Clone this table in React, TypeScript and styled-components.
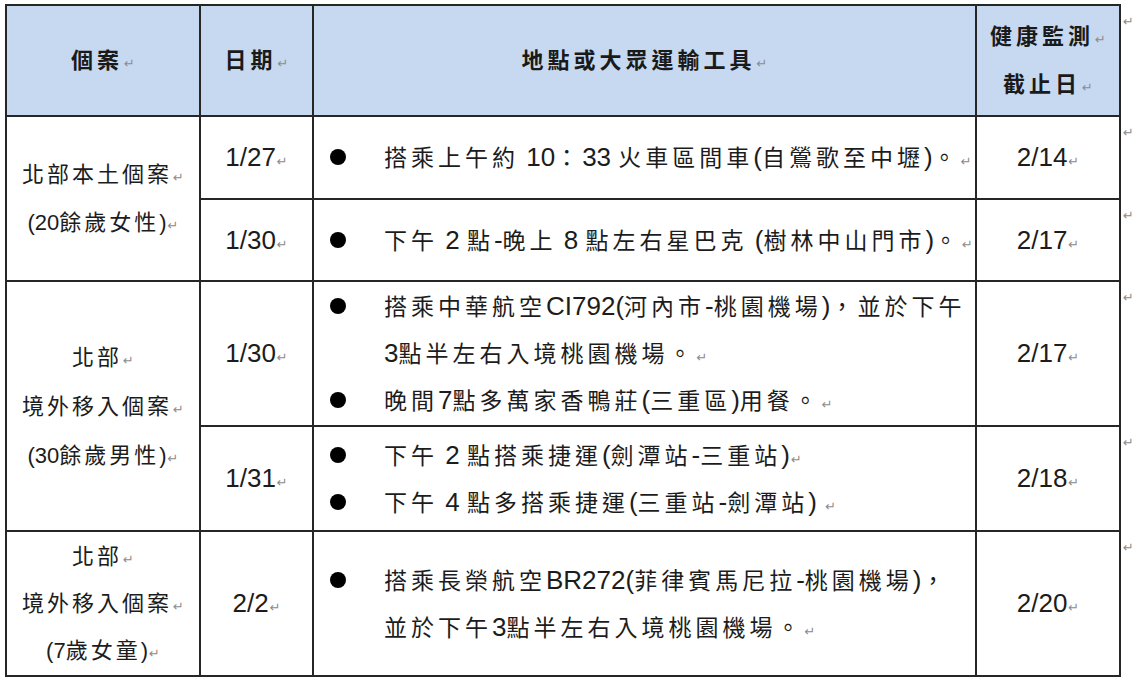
import React from 'react';
import styled, { createGlobalStyle } from 'styled-components';

const GlobalStyle = createGlobalStyle`
  html, body {
    margin: 0;
    padding: 0;
    background: #ffffff;
  }
  body {
    font-family: "Liberation Sans", "Noto Sans CJK TC", sans-serif;
    color: #1c1c1c;
  }
`;

// Chinese runs are set on a wider grid than Latin ones, as Word does
const Han = styled.span`
  font-family: "Noto Sans CJK TC", sans-serif;
  line-height: 1;
`;

const Mark = styled.span`
  font-family: "DejaVu Sans", sans-serif;
  font-size: 13px;
  font-weight: 400;
  line-height: 1;
  letter-spacing: 0;
  color: #8c8c8c;
  margin-left: 1px;
`;

const Page = styled.div`
  padding: 4px 0 0 5px;
`;

const Table = styled.table`
  border-collapse: collapse;
  table-layout: fixed;
  width: 1126px;
`;

const Row = styled.tr<{ $h: number }>`
  height: ${p => p.$h}px;
`;

interface CellProps {
  $latin?: number;
  $han?: number;
  $gap?: number;
  $lh?: number;
}

const HeadCell = styled.th`
  background: #c6d9f1;
  border: 2px solid #262626;
  font-weight: 700;
  font-size: 22px;
  line-height: 48px;
  text-align: center;
  vertical-align: middle;
  padding: 0;
  color: #1a1a1a;

  ${Han} {
    font-size: 22px;
    letter-spacing: 4px;
  }
`;

const Cell = styled.td<CellProps>`
  border: 2px solid #262626;
  padding: 0;
  vertical-align: middle;
  text-align: center;
  font-size: ${p => p.$latin ?? 26}px;
  line-height: ${p => p.$lh ?? 47}px;

  ${Han} {
    font-size: ${p => p.$han ?? 23}px;
    letter-spacing: ${p => p.$gap ?? 4}px;
  }
`;

const RowEnd = styled.td`
  border: none;
  padding: 9px 0 0 1px;
  vertical-align: top;
  text-align: left;
  line-height: 14px;
`;

const BulletList = styled.ul`
  list-style: none;
  margin: 0;
  padding: 0 0 0 16px;
  text-align: left;
`;

const BulletItem = styled.li`
  display: flex;
  align-items: flex-start;
  white-space: nowrap;
`;

const Dot = styled.span`
  flex: none;
  width: 16px;
  height: 16px;
  margin: 15px 38px 0 0;
  border-radius: 50%;
  background: #000000;
`;

const ItemText = styled.span`
  display: block;
`;

const HAN_RE = /([\u2E80-\u9FFF\u3000-\u303F\uFF00-\uFFEF]+)/;

const Run: React.FC<{ text: string }> = ({ text }) => (
  <>
    {text.split(HAN_RE).map((part, i) =>
      part === '' ? null : i % 2 === 1 ? <Han key={i}>{part}</Han> : <React.Fragment key={i}>{part}</React.Fragment>
    )}
  </>
);

const Bullets: React.FC<{ items: string[][] }> = ({ items }) => (
  <BulletList>
    {items.map((lines, i) => (
      <BulletItem key={i}>
        <Dot />
        <ItemText>
          {lines.map((line, j) => (
            <React.Fragment key={j}>
              <Run text={line} />
              {j < lines.length - 1 ? <br /> : <Mark>↵</Mark>}
            </React.Fragment>
          ))}
        </ItemText>
      </BulletItem>
    ))}
  </BulletList>
);

const Lines: React.FC<{ lines: string[] }> = ({ lines }) => (
  <>
    {lines.map((line, i) => (
      <div key={i}>
        <Run text={line} />
        <Mark>↵</Mark>
      </div>
    ))}
  </>
);

const Text: React.FC<{ children: string }> = ({ children }) => (
  <>
    <Run text={children} />
    <Mark>↵</Mark>
  </>
);

const EndMark = () => (
  <RowEnd>
    <Mark>↵</Mark>
  </RowEnd>
);

export default function App() {
  return (
    <Page>
      <GlobalStyle />
      <Table>
        <colgroup>
          <col style={{ width: 194 }} />
          <col style={{ width: 113 }} />
          <col style={{ width: 663 }} />
          <col style={{ width: 144 }} />
          <col style={{ width: 12 }} />
        </colgroup>
        <tbody>
          <Row $h={111}>
            <HeadCell><Text>個案</Text></HeadCell>
            <HeadCell><Text>日期</Text></HeadCell>
            <HeadCell><Text>地點或大眾運輸工具</Text></HeadCell>
            <HeadCell><Lines lines={['健康監測', '截止日']} /></HeadCell>
            <EndMark />
          </Row>
          <Row $h={83}>
            <Cell rowSpan={2} $latin={22} $han={22} $gap={3} $lh={48}>
              <Lines lines={['北部本土個案', '(20餘歲女性)']} />
            </Cell>
            <Cell><Text>1/27</Text></Cell>
            <Cell>
              <Bullets items={[['搭乘上午約 10：33 火車區間車(自鶯歌至中壢)。']]} />
            </Cell>
            <Cell><Text>2/14</Text></Cell>
            <EndMark />
          </Row>
          <Row $h={82}>
            <Cell><Text>1/30</Text></Cell>
            <Cell>
              <Bullets items={[['下午 2 點-晚上 8 點左右星巴克 (樹林中山門市)。']]} />
            </Cell>
            <Cell><Text>2/17</Text></Cell>
            <EndMark />
          </Row>
          <Row $h={145}>
            <Cell rowSpan={2} $latin={22} $han={22} $gap={3} $lh={49}>
              <Lines lines={['北部', '境外移入個案', '(30餘歲男性)']} />
            </Cell>
            <Cell><Text>1/30</Text></Cell>
            <Cell>
              <Bullets
                items={[
                  ['搭乘中華航空CI792(河內市-桃園機場)，並於下午', '3點半左右入境桃園機場。'],
                  ['晚間7點多萬家香鴨莊(三重區)用餐。'],
                ]}
              />
            </Cell>
            <Cell><Text>2/17</Text></Cell>
            <EndMark />
          </Row>
          <Row $h={105}>
            <Cell><Text>1/31</Text></Cell>
            <Cell>
              <Bullets
                items={[
                  ['下午 2 點搭乘捷運(劍潭站-三重站)'],
                  ['下午 4 點多搭乘捷運(三重站-劍潭站)  '],
                ]}
              />
            </Cell>
            <Cell><Text>2/18</Text></Cell>
            <EndMark />
          </Row>
          <Row $h={145}>
            <Cell $latin={22} $han={22} $gap={3} $lh={47}>
              <Lines lines={['北部', '境外移入個案', '(7歲女童)']} />
            </Cell>
            <Cell><Text>2/2</Text></Cell>
            <Cell>
              <Bullets
                items={[['搭乘長榮航空BR272(菲律賓馬尼拉-桃園機場)，', '並於下午3點半左右入境桃園機場。']]}
              />
            </Cell>
            <Cell><Text>2/20</Text></Cell>
            <EndMark />
          </Row>
        </tbody>
      </Table>
    </Page>
  );
}
